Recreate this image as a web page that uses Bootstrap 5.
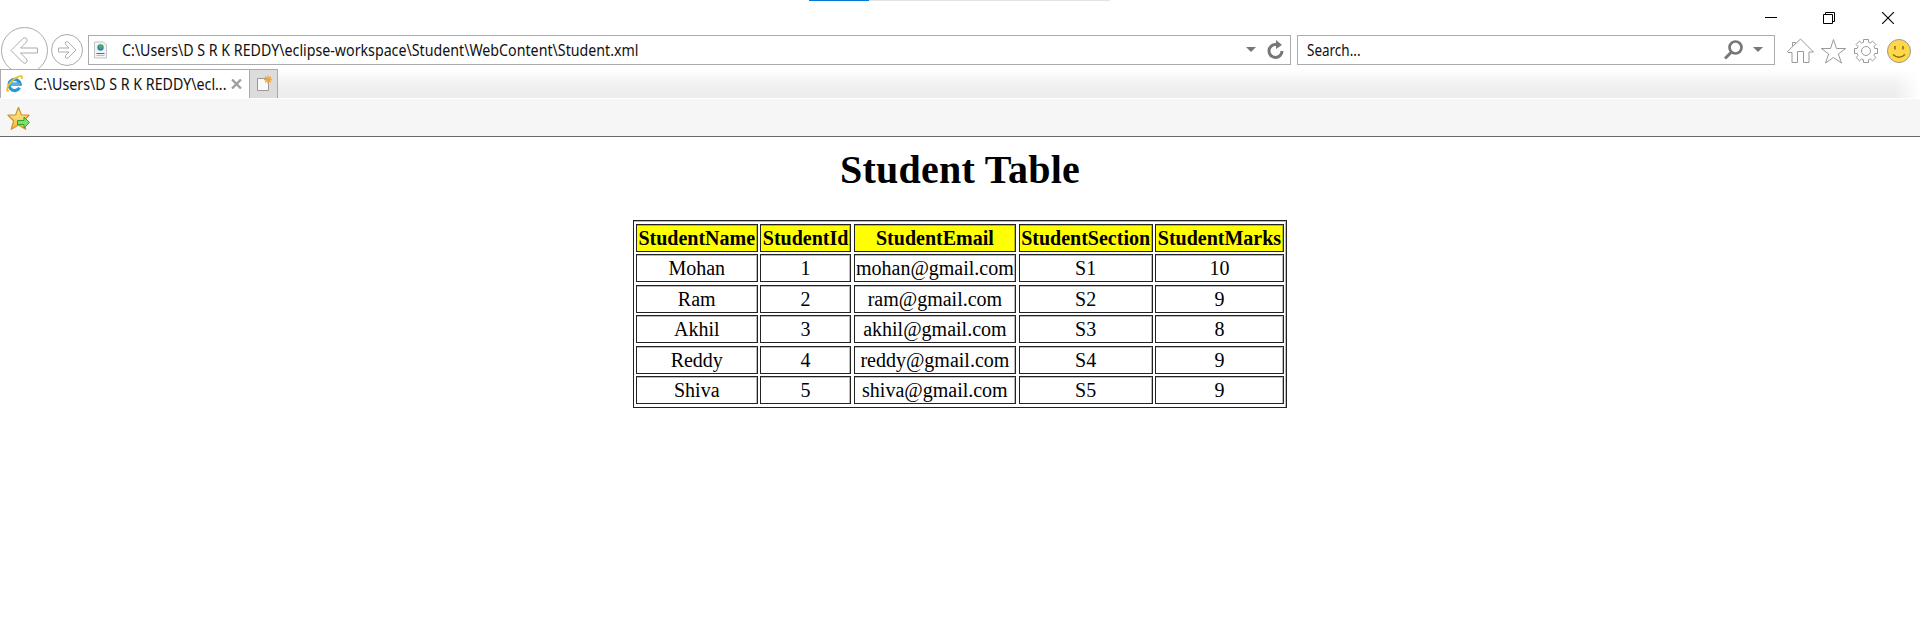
<!DOCTYPE html>
<html lang="en">
<head>
<meta charset="utf-8">
<meta name="viewport" content="width=device-width, initial-scale=1">
<title>Student Table</title>
<link href="https://cdn.jsdelivr.net/npm/bootstrap@5.3.0/dist/css/bootstrap.min.css" rel="stylesheet">
<style>
body{font-family:"Open Sans","Noto Sans",sans-serif;font-size:15.5px;color:#111;background:#fff;overflow:hidden}
svg{display:block;flex:none}
.titlebar{height:27px}
.load-track{width:301px;height:1px;left:809px;background:#e4e4e4}
.load-fill{width:60px;height:1px;background:#0078d7}
.win-buttons{padding:12px 26px 0 0;gap:46px}
.win-close{margin-left:1px}
.navrow{height:42px}
.back-btn{margin-left:1px}
.fwd-btn{margin:7px 0 0 3px}
.field-box{height:30px;border:1px solid #ababab;background:#fff;margin-top:8px}
.address{width:1203px;margin-left:5px}
.address-tools{gap:11px;padding-right:6px}
.search{width:478px;margin-left:6px}
.search-tools{gap:10px;padding-right:11px}
.search-hint{margin-left:9px}
.command-icons{margin-top:10px}
.ui-text{font-family:"Noto Sans",sans-serif;line-height:20px;white-space:nowrap;transform-origin:0 50%;transform:scaleX(.917)}
.search-hint.ui-text{transform:scaleX(.87)}
.tab-title{width:193px}
.tabrow{height:29px;background:linear-gradient(#fff,#f1f1f1 55%,#ececec)}
.tabrow::after{content:"";margin-left:auto;width:26px;background:linear-gradient(90deg,#fff0,#fff)}
.page-tab{width:250px;border:1px solid #ababab;border-bottom:0;background:#fff}
.tab-close{margin-right:7px}
.new-tab{width:28px;border:1px solid #ababab;border-left:0;border-bottom:0;background:#dcdcdc}
.favbar{height:38px;margin-top:1px;background:#f6f6f6;border-bottom:1px solid #696969;padding:6px 0 0 6px}
.sheet{font-family:"Liberation Serif",serif;color:#000}
.sheet h1{font-size:40px;font-weight:700;line-height:46px;letter-spacing:.25px;margin:10px 0 27px}
.students{display:grid;grid-template-columns:121.7px 91px 162.6px 133.9px 128.8px;grid-auto-rows:28px;gap:2.5px;border:1px solid #222;padding:2.6px 1.9px 3px;width:654px;height:188px;font-size:20px;box-shadow:inset -1px 1px 0 #0004}
.students thead,.students tbody,.students tr{display:contents}
.students th,.students td{border:1px solid #222;line-height:26px;text-align:center;white-space:nowrap;padding:0;box-shadow:inset -1px 1px 0 #0004}
.students th{background:#ff0}
</style>
<script src="https://cdn.jsdelivr.net/npm/bootstrap@5.3.0/dist/js/bootstrap.bundle.min.js"></script>
</head>
<body>
<header>
<div class="titlebar d-flex justify-content-end position-relative">
<div class="load-track position-absolute top-0"><div class="load-fill"></div></div>
<div class="win-buttons d-flex">
<svg width="12" height="12"><path d="M0 5.5h12" stroke="#000"/></svg>
<svg width="12" height="12" fill="none" stroke="#000"><path d="M.5 2.500h9v9h-9zM2.500 2.500V.5h9v9h-2"/></svg>
<svg class="win-close" width="12" height="12"><path d="M0 0l12 12M12 0L0 12" stroke="#000" stroke-width="1.1"/></svg>
</div>
</div>
<div class="navrow d-flex align-items-start overflow-hidden">
<svg class="back-btn" width="47" height="47" fill="none" stroke="#ababab"><circle cx="23.500" cy="23.500" r="23"/><path d="M10 23.500L22 11.500q2-1.500 3.500 0t0 3.500L19.500 21H36.500v5H19.500l6 6q1.500 2 0 3.500t-3.500 0z"/></svg>
<svg class="fwd-btn" width="32" height="32" fill="none" stroke="#ababab"><circle cx="16" cy="16" r="15.500"/><path d="M25 16l-8 8q-1.500.7-2.300 0t0-2.500L18 18H7.500v-4H18l-3.300-3.500q-.8-1.500 0-2.500t2.300 0z"/></svg>
<div class="field-box address d-flex align-items-center">
<svg width="33" height="24"><path d="M5.500 4h9l3 3v13h-12z" fill="#f4f4f4" stroke="#c4c4c4"/><circle cx="11.500" cy="9.500" r="3.200" fill="#2f83c0"/><path d="M9.500 8.500l2-2 2.500 2-2.500 2.500z" fill="#4bb749"/><path d="M7.500 15.500h8" stroke="#666"/><path d="M7.500 17.500h8" stroke="#bbb"/></svg>
<span class="ui-text">C:\Users\D S R K REDDY\eclipse-workspace\Student\WebContent\Student.xml</span>
<div class="address-tools d-flex ms-auto align-items-center">
<svg width="10" height="6"><path d="M0 0h10L5 5z" fill="#777"/></svg>
<svg width="17" height="20" fill="none"><path d="M9 4.500A6.500 6.500 0 1 0 15 11" stroke="#777" stroke-width="3"/><path d="M9 0l6 5-6 4z" fill="#777"/></svg>
</div>
</div>
<div class="field-box search d-flex align-items-center">
<span class="ui-text search-hint">Search...</span>
<div class="search-tools d-flex ms-auto align-items-center">
<svg width="19" height="20" fill="none" stroke="#777"><circle cx="11.500" cy="7.500" r="6" stroke-width="2.700"/><path d="M7.500 12L1 18.500" stroke-width="3"/></svg>
<svg width="10" height="6"><path d="M0 0h10L5 5z" fill="#777"/></svg>
</div>
</div>
<svg class="command-icons" width="140" height="30" viewBox="0 0 140 30" fill="none" stroke="#999">
<path d="M12.500 14.500L25.500 2l13 13H34v10.500h-5.500v-11h-6v11h-5.500V15.500h-4zM17.500 9V5.500h3v1.500"/>
<path d="M58.500 2.500l3 9h9.200l-7.400 5.500 3.200 9-8-5.500-8 5.500 3.200-9-7.400-5.500h9.200z"/>
<g transform="translate(91 14)"><circle r="4.500"/><path d="M-2.500-8.800v-2.700h5v2.700L4.500-8l2-1.900 3.400 3.400-1.900 2 .8 2h2.700v5H8.800l-.8 2 1.900 2-3.400 3.400-2-1.900-2 .8v2.700h-5V8.800l-2-.8-2 1.900-3.400-3.400 1.900-2-.8-2h-2.700v-5h2.700l.8-2-1.900-2 3.400-3.400 2 1.900z"/></g>
<circle cx="124" cy="14" r="11.500" fill="#ffd748"/><path d="M120 9v3.500M128 9v3.500" stroke="#856b16" stroke-width="1.500"/><path d="M118 17.500q6 5.500 12 0" stroke="#856b16" stroke-width="1.500"/>
</svg>
</div>
<div class="tabrow d-flex">
<div class="page-tab d-flex align-items-center">
<svg width="33" height="28"><path d="M8.500 14.200h10.700A5.600 5.600 0 1 0 18.500 17.800" fill="none" stroke="#2b93d6" stroke-width="3.200"/><path d="M8.500 14h10.500" stroke="#63c3f1" stroke-width="1.300"/><path d="M8 20.500c-4 2-1.500-6 4-10.500s11-5.500 8.500-1" fill="none" stroke="#f1bd25" stroke-width="1.700"/></svg>
<span class="ui-text tab-title">C:\Users\D S R K REDDY\ecl...</span>
<svg class="ms-auto tab-close" width="11" height="10"><path d="M1 .5l9 9M10 .5l-9 9" stroke="#a0a0a0" stroke-width="2.400"/></svg>
</div>
<div class="new-tab"><svg width="27" height="27"><path d="M7.500 8.500h11v12h-11z" fill="#fafafa" stroke="#999"/><path d="M18 5.500v8M14 9.500h8M15.200 6.700l5.600 5.600M20.800 6.700l-5.600 5.600" stroke="#f2a630" stroke-width="1.300"/></svg></div>
</div>
<div class="favbar">
<svg width="26" height="28"><defs><linearGradient id="gold" x2="0" y2="1"><stop stop-color="#fff0a8"/><stop offset="1" stop-color="#f5b82e"/></linearGradient></defs><path d="M12.500 2.500l2.800 7.300 7.700.4-5.600 5.600 2.300 8.400-7.200-4.200-7.200 4.200 2.300-8.400-5.600-5.600 7.700-.4z" fill="url(#gold)" stroke="#cf9630" stroke-width="1.300" stroke-linejoin="round"/><path d="M11.500 15.500h6.500v-3.500l5.500 5.500-5.500 5.500v-3.500h-6.500z" fill="#7ee06c" stroke="#2fa531"/></svg>
</div>
</header>
<main class="sheet d-flex flex-column align-items-center">
<h1>Student Table</h1>
<table class="students">
<thead><tr><th>StudentName</th><th>StudentId</th><th>StudentEmail</th><th>StudentSection</th><th>StudentMarks</th></tr></thead>
<tbody>
<tr><td>Mohan</td><td>1</td><td>mohan@gmail.com</td><td>S1</td><td>10</td></tr>
<tr><td>Ram</td><td>2</td><td>ram@gmail.com</td><td>S2</td><td>9</td></tr>
<tr><td>Akhil</td><td>3</td><td>akhil@gmail.com</td><td>S3</td><td>8</td></tr>
<tr><td>Reddy</td><td>4</td><td>reddy@gmail.com</td><td>S4</td><td>9</td></tr>
<tr><td>Shiva</td><td>5</td><td>shiva@gmail.com</td><td>S5</td><td>9</td></tr>
</tbody>
</table>
</main>
</body>
</html>
